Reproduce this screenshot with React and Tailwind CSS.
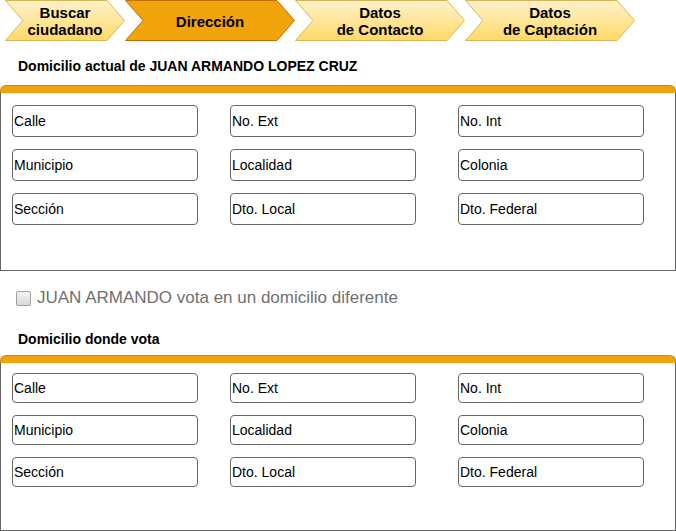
import React from 'react';

const steps = [
  { id: 'buscar', lines: ['Buscar', 'ciudadano'], width: 120, active: false },
  { id: 'direccion', lines: ['Dirección'], width: 170, active: true },
  { id: 'contacto', lines: ['Datos', 'de Contacto'], width: 170, active: false },
  { id: 'captacion', lines: ['Datos', 'de Captación'], width: 170, active: false },
];

const fields = [
  ['Calle', 'No. Ext', 'No. Int'],
  ['Municipio', 'Localidad', 'Colonia'],
  ['Sección', 'Dto. Local', 'Dto. Federal'],
];

const Step = ({ step }) => {
  const w = step.width;
  const d = 18;
  const points = `0.5,0.5 ${w - d},0.5 ${w - 0.5},20.5 ${w - d},40.5 0.5,40.5 ${d},20.5`;
  return (
    <div className="relative h-[41px]" style={{ width: w }}>
      <svg className="absolute inset-0" width={w} height="41" viewBox={`0 0 ${w} 41`}>
        <defs>
          <linearGradient id={`g-${step.id}`} x1="0" y1="0" x2="0" y2="1">
            <stop offset="0" stopColor="#fff2cc" />
            <stop offset="1" stopColor="#ffd966" />
          </linearGradient>
        </defs>
        <polygon
          points={points}
          fill={step.active ? '#f0a30a' : `url(#g-${step.id})`}
          stroke={step.active ? '#bd7000' : '#d6b656'}
          strokeWidth="1"
        />
      </svg>
      <div className="relative flex h-full flex-col items-center justify-center pt-[1px] text-[15px] font-bold leading-[17px] text-black">
        {step.lines.map((l) => (
          <span key={l}>{l}</span>
        ))}
      </div>
    </div>
  );
};

const Panel = ({ rowH, padTop, boxH }) => (
  <div className="w-full">
    <div className="h-[8px] rounded-t-[6px] border border-b-0 border-[#c98a0c] bg-[#f0a30a]" />
    <div className="border border-t-0 border-[#666666] bg-white" style={{ height: boxH }}>
      <div className="flex flex-col gap-[12px] pl-[11px]" style={{ paddingTop: padTop }}>
        {fields.map((row, i) => (
          <div key={i} className="grid grid-cols-[218px_228px_186px]">
            {row.map((f) => (
              <div
                key={f}
                className="flex w-[186px] items-center rounded-[4px] border border-[#666666] bg-white pl-[1px] text-[14px] text-black"
                style={{ height: rowH }}
              >
                {f}
              </div>
            ))}
          </div>
        ))}
      </div>
    </div>
  </div>
);

export default function App() {
  return (
    <div className="h-[531px] w-[676px] overflow-hidden bg-white font-['Liberation_Sans',Arial,sans-serif]">
      <div className="flex pl-[5px]">
        {steps.map((s) => (
          <Step key={s.id} step={s} />
        ))}
      </div>

      <h2 className="mt-[17px] h-[17px] pl-[18px] text-[14px] font-bold leading-[17px] text-black">
        Domicilio actual de JUAN ARMANDO LOPEZ CRUZ
      </h2>

      <div className="mt-[10px]">
        <Panel rowH={32} padTop={12} boxH={178} />
      </div>

      <label className="mt-[17px] flex h-[20px] items-center gap-[6px] pl-[16px] text-[17px] text-[#707070]">
        <span className="h-[15px] w-[15px] rounded-[2px] border border-[#a0a0a0] bg-gradient-to-b from-[#f4f4f4] to-[#d8d8d8]" />
        JUAN ARMANDO vota en un domicilio diferente
      </label>

      <h2 className="mt-[23px] h-[17px] pl-[18px] text-[14px] font-bold leading-[17px] text-black">
        Domicilio donde vota
      </h2>

      <div className="mt-[7px]">
        <Panel rowH={30} padTop={10} boxH={168} />
      </div>
    </div>
  );
}
